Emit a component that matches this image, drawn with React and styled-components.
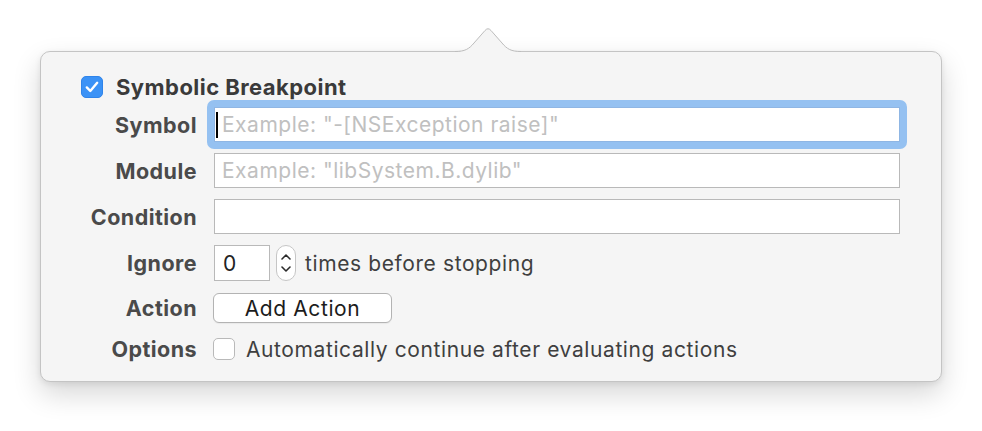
import React from "react";
import styled, { createGlobalStyle } from "styled-components";

const GlobalStyle = createGlobalStyle`
  html, body { margin: 0; padding: 0; background: #ffffff; }
  body { font-family: Inter, "Noto Sans", "Liberation Sans", sans-serif; }
`;

const Page = styled.div`
  width: 982px;
  height: 431px;
  box-sizing: border-box;
  padding: 51px 0 0 40px;
  overflow: hidden;
`;

const Popover = styled.div`
  position: relative;
  width: 902px;
  height: 331px;
  box-sizing: border-box;
  background: #f5f5f5;
  border: 1px solid #c4c4c4;
  border-radius: 10px;
  box-shadow: 0 12px 28px rgba(0, 0, 0, 0.16), 0 2px 6px rgba(0, 0, 0, 0.08);
  padding: 24px 41px 18px 40px;
`;

const Arrow = styled.svg`
  position: absolute;
  top: -25px;
  left: 414px;
  overflow: visible;
`;

const Header = styled.div`
  display: flex;
  align-items: center;
  gap: 13px;
  height: 22px;
  margin-bottom: 9px;
`;

const CheckBox = styled.span`
  width: 22px;
  height: 22px;
  box-sizing: border-box;
  border-radius: 5px;
  display: inline-flex;
  align-items: center;
  justify-content: center;
  flex: none;
  background: ${(p) => (p.$checked ? "#3b92f6" : "#ffffff")};
  border: 1px solid ${(p) => (p.$checked ? "#2f84ea" : "#b9b9b9")};
`;

const Title = styled.span`
  font-weight: 700;
  font-size: 22px;
  letter-spacing: 0.45px;
  color: #3a3a3a;
`;

const Form = styled.div`
  display: grid;
  grid-template-columns: 116px 1fr;
  column-gap: 17px;
  grid-template-rows: 35px 35px 35px 36px 32px 28px;
  row-gap: 11px;
  align-items: center;
`;

const Label = styled.div`
  font-weight: 700;
  font-size: 21.5px;
  letter-spacing: 0.45px;
  color: #4a4a4a;
  text-align: right;
  white-space: nowrap;
`;

const FocusRing = styled.div`
  margin: -7px;
  padding: 7px;
  border-radius: 7px;
  background: #95c1f1;
`;

const TextField = styled.div`
  height: 35px;
  box-sizing: border-box;
  border: 1px solid ${(p) => (p.$focused ? "#8fb6e4" : "#b9b9b9")};
  background: #ffffff;
  display: flex;
  align-items: center;
  padding-left: ${(p) => (p.$focused ? "1px" : "7px")};
  font-size: 21px;
  letter-spacing: 0.5px;
  color: #c0c0c0;
  white-space: nowrap;
`;

const Caret = styled.span`
  width: 2px;
  height: 26px;
  background: #000000;
  margin-right: 4px;
  flex: none;
`;

const Inline = styled.div`
  display: flex;
  align-items: center;
`;

const NumberField = styled.div`
  width: 56px;
  height: 36px;
  box-sizing: border-box;
  border: 1px solid #b9b9b9;
  background: #ffffff;
  display: flex;
  align-items: center;
  padding-left: 8px;
  font-size: 21px;
  color: #222222;
`;

const Stepper = styled.div`
  width: 20px;
  height: 36px;
  box-sizing: border-box;
  margin-left: 6px;
  border: 1px solid #c6c6c6;
  border-radius: 10px;
  background: #ffffff;
  display: flex;
  flex-direction: column;
  align-items: center;
  justify-content: center;
  gap: 6px;
`;

const Text = styled.span`
  font-size: 21px;
  letter-spacing: 0.6px;
  color: #3f3f3f;
  margin-left: ${(p) => p.$gap || 0}px;
  white-space: nowrap;
`;

const Button = styled.div`
  width: 179px;
  height: 30px;
  box-sizing: border-box;
  margin-left: -1px;
  border: 1px solid #b3b3b3;
  border-radius: 6px;
  background: #ffffff;
  box-shadow: 0 1px 1px rgba(0, 0, 0, 0.05);
  display: flex;
  align-items: center;
  justify-content: center;
  font-size: 21px;
  letter-spacing: 0.6px;
  color: #1c1c1c;
`;

const OptionBox = styled(CheckBox)`
  margin-left: -1px;
`;

function Chevron({ up }) {
  return (
    <svg width="10" height="6" viewBox="0 0 10 6">
      <path
        d={up ? "M1 5 L5 1 L9 5" : "M1 1 L5 5 L9 1"}
        fill="none"
        stroke="#2b2b2b"
        strokeWidth="1.6"
        strokeLinecap="round"
        strokeLinejoin="round"
      />
    </svg>
  );
}

export default function App() {
  return (
    <>
      <GlobalStyle />
      <Page>
        <Popover>
          <Arrow width="66" height="27" viewBox="0 0 66 27">
            <path
              d="M0 24.5 C10 24.5 14 22 19 16 L30 3.5 Q33 0 36 3.5 L47 16 C52 22 56 24.5 66 24.5 L66 27 L0 27 Z"
              fill="#f5f5f5"
            />
            <path
              d="M0 24.5 C10 24.5 14 22 19 16 L30 3.5 Q33 0 36 3.5 L47 16 C52 22 56 24.5 66 24.5"
              fill="none"
              stroke="#bdbdbd"
              strokeWidth="1"
            />
          </Arrow>
          <Header>
            <CheckBox $checked>
              <svg width="14" height="12" viewBox="0 0 14 12">
                <path
                  d="M1.8 6.4 L5.3 10 L12.2 1.8"
                  fill="none"
                  stroke="#ffffff"
                  strokeWidth="2.4"
                  strokeLinecap="round"
                  strokeLinejoin="round"
                />
              </svg>
            </CheckBox>
            <Title>Symbolic Breakpoint</Title>
          </Header>
          <Form>
            <Label>Symbol</Label>
            <FocusRing>
              <TextField $focused>
                <Caret />
                Example: "-[NSException raise]"
              </TextField>
            </FocusRing>

            <Label>Module</Label>
            <TextField>Example: "libSystem.B.dylib"</TextField>

            <Label>Condition</Label>
            <TextField />

            <Label>Ignore</Label>
            <Inline>
              <NumberField>0</NumberField>
              <Stepper>
                <Chevron up />
                <Chevron />
              </Stepper>
              <Text $gap={9}>times before stopping</Text>
            </Inline>

            <Label>Action</Label>
            <Inline>
              <Button>Add Action</Button>
            </Inline>

            <Label>Options</Label>
            <Inline>
              <OptionBox />
              <Text $gap={11}>Automatically continue after evaluating actions</Text>
            </Inline>
          </Form>
        </Popover>
      </Page>
    </>
  );
}
